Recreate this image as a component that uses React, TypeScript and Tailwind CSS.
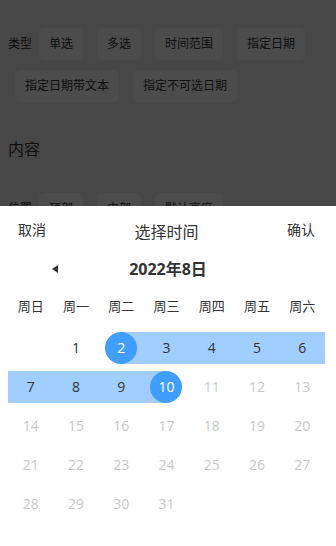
import React from "react";

const FONT = { fontFamily: '"Open Sans", "Noto Sans CJK SC", sans-serif' };

const WEEK = ["周日", "周一", "周二", "周三", "周四", "周五", "周六"];

type Day = { d: number; kind: "normal" | "start" | "end" | "range" | "disabled" } | null;

function buildDays(): Day[][] {
  const cells: Day[] = [null];
  for (let d = 1; d <= 31; d++) {
    let kind: NonNullable<Day>["kind"] = "disabled";
    if (d === 1) kind = "normal";
    else if (d === 2) kind = "start";
    else if (d === 10) kind = "end";
    else if (d > 2 && d < 10) kind = "range";
    cells.push({ d, kind });
  }
  while (cells.length % 7) cells.push(null);
  const rows: Day[][] = [];
  for (let i = 0; i < cells.length; i += 7) rows.push(cells.slice(i, i + 7));
  return rows;
}

function Chip({ children }: { children: React.ReactNode }) {
  return (
    <span className="mx-[7px] my-[5px] flex h-8 items-center rounded-md bg-white px-[10px] text-[12px] text-[#333]">
      {children}
    </span>
  );
}

function DayCell({ day }: { day: Day }) {
  if (!day) return <div className="h-8" />;
  const { d, kind } = day;
  let band = "";
  if (kind === "range") band = "bg-[#a0cfff]";
  if (kind === "start") band = "bg-[linear-gradient(to_right,transparent_50%,#a0cfff_50%)]";
  if (kind === "end") band = "bg-[linear-gradient(to_left,transparent_50%,#a0cfff_50%)]";
  const selected = kind === "start" || kind === "end";
  return (
    <div className={`flex h-8 items-center justify-center ${band}`}>
      {selected ? (
        <span className="flex h-8 w-8 items-center justify-center rounded-full bg-[#409eff] text-[14px] text-white">{d}</span>
      ) : (
        <span className={`text-[14px] ${kind === "disabled" ? "text-[#c8c8c8]" : "text-[#333]"}`}>{d}</span>
      )}
    </div>
  );
}

export default function App() {
  const rows = buildDays();
  return (
    <div className="relative h-[546px] w-[336px] overflow-hidden bg-[#eeeeee]" style={FONT}>
      {/* page behind the mask */}
      <div className="pl-2 pt-[23px]">
        <div className="flex flex-wrap items-center">
          <span className="text-[12px] text-[#333]">类型</span>
          <Chip>单选</Chip>
          <Chip>多选</Chip>
          <Chip>时间范围</Chip>
          <Chip>指定日期</Chip>
          <Chip>指定日期带文本</Chip>
          <Chip>指定不可选日期</Chip>
        </div>
        <div className="mt-[30px] text-[16px] leading-6 text-[#333]">内容</div>
        <div className="mt-[27px] flex flex-wrap items-center">
          <span className="text-[12px] text-[#333]">位置</span>
          <Chip>顶部</Chip>
          <Chip>中部</Chip>
          <Chip>默认高度</Chip>
        </div>
      </div>

      <div className="absolute inset-0 bg-black/70" />

      {/* bottom sheet */}
      <div className="absolute inset-x-0 bottom-0 h-[340px] bg-white">
        <div className="flex h-[46px] items-center justify-between pl-[18px] pr-[21px]">
          <span className="text-[14px] text-[#333]">取消</span>
          <span className="mt-[6px] text-[16px] text-[#333]">选择时间</span>
          <span className="text-[14px] text-[#333]">确认</span>
        </div>
        <div className="relative flex h-[34px] items-center justify-center">
          <svg className="absolute left-[52px] top-[13px]" width="6" height="8" viewBox="0 0 6 8">
            <path d="M6 0 L0 4 L6 8 Z" fill="#333" />
          </svg>
          <span className="text-[16px] font-bold text-[#333]">2022年8日</span>
        </div>
        <div className="grid h-[42px] grid-cols-7 items-center pl-2 pr-[11px]">
          {WEEK.map((w) => (
            <span key={w} className="text-center text-[13px] text-[#333]">{w}</span>
          ))}
        </div>
        <div className="pl-2 pr-[11px]">
          {rows.map((r, i) => (
            <div key={i} className="grid h-[39px] grid-cols-7 items-center">
              {r.map((day, j) => (
                <DayCell key={j} day={day} />
              ))}
            </div>
          ))}
        </div>
      </div>
    </div>
  );
}
